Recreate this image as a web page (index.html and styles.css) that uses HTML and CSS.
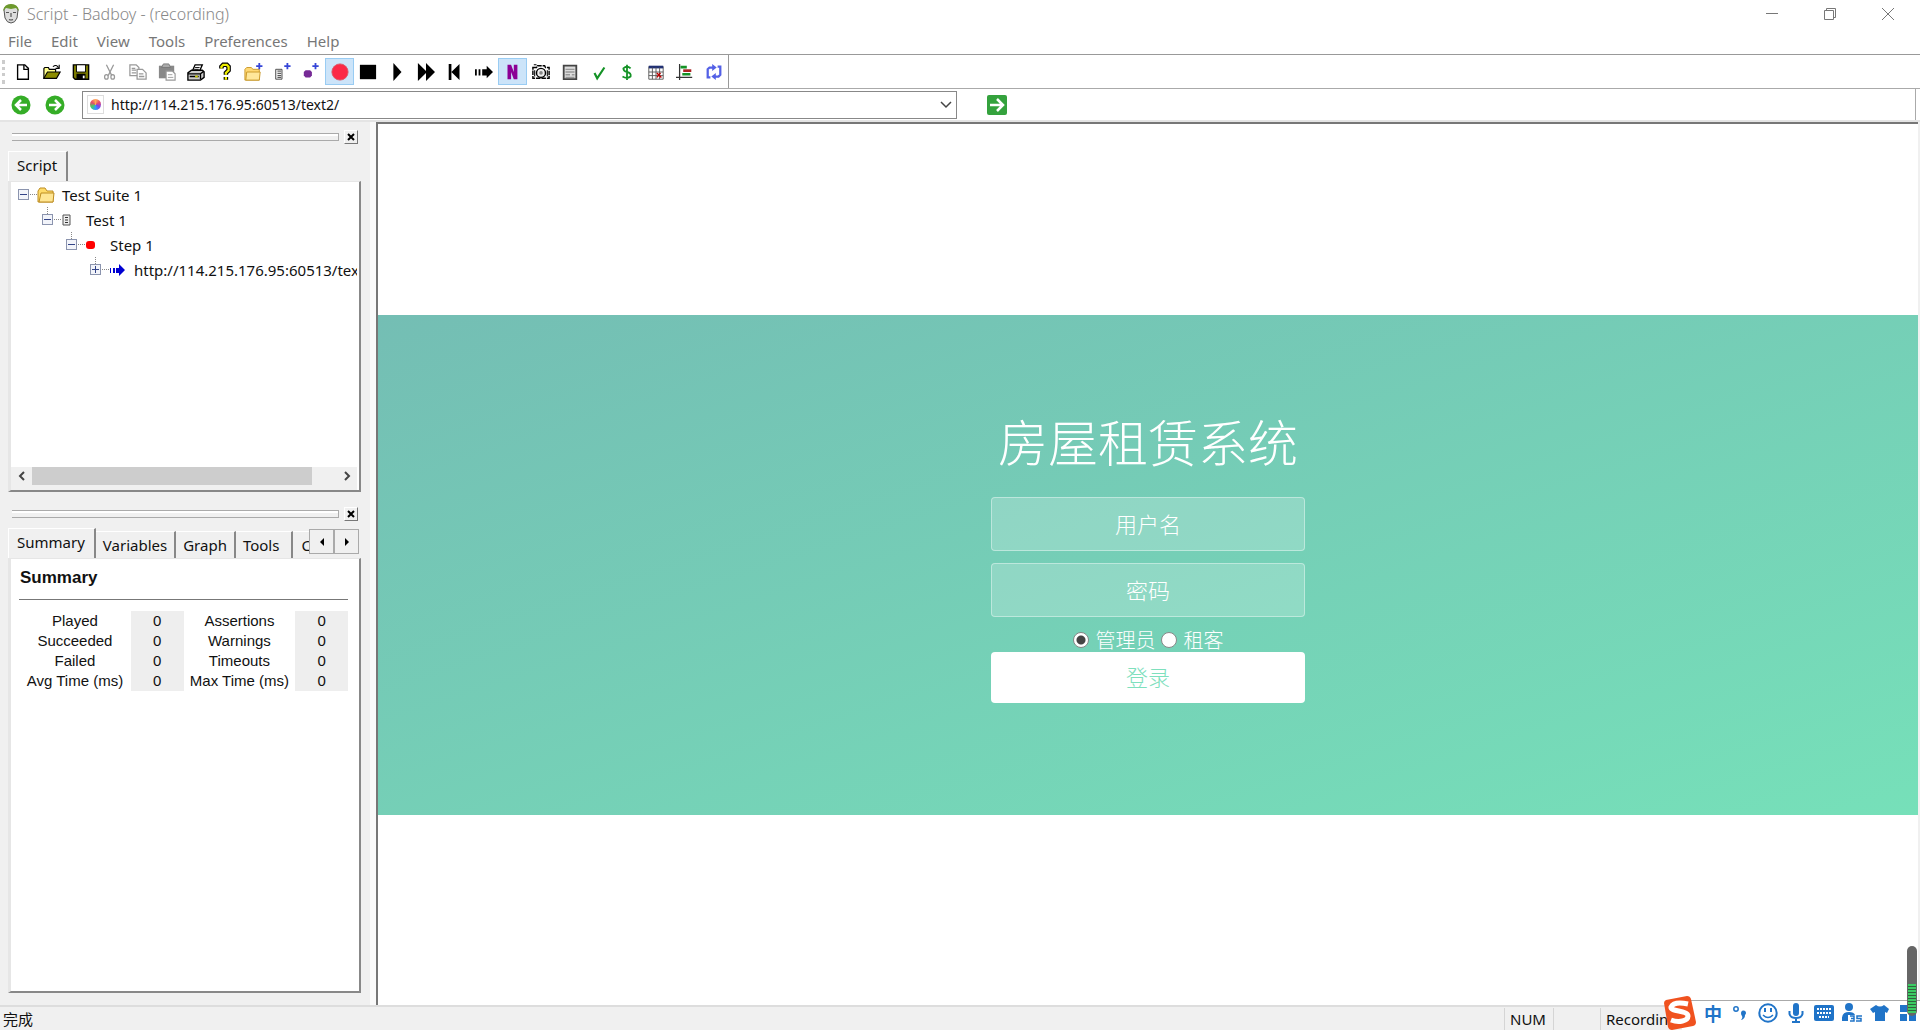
FILE: index.html
```html
<!DOCTYPE html>
<html lang="zh-CN">
<head>
<meta charset="utf-8">
<title>Script - Badboy - (recording)</title>
<link rel="stylesheet" href="styles.css">
</head>
<body>
<header class="titlebar">
  <svg class="app-icon" viewBox="0 0 18 20"><path d="M2 6Q3 1 9 1t7 5l-1 8q-2 5-6 5t-6-5z" fill="#ddd" stroke="#555"/><path d="M1 7Q2 0 9 0t8 7l-3-3-5 1-5-1z" fill="#6d9a2c"/><path d="M4 8.500h3M11 8.500h3M9 9v4M7 15.500q2 1 4 0" stroke="#555" stroke-width="1.200" fill="none"/></svg>
  <span class="title-text">Script - Badboy - (recording)</span>
  <div class="window-buttons">
    <button aria-label="Minimize"><svg viewBox="0 0 12 12"><path d="M0 5.500h12"/></svg></button>
    <button aria-label="Restore"><svg viewBox="0 0 12 12"><path d="M.5 2.500h9v9h-9zM2.500 2.500v-2h9v9h-2"/></svg></button>
    <button aria-label="Close"><svg viewBox="0 0 12 12"><path d="M0 0l12 12M12 0L0 12"/></svg></button>
  </div>
</header>
<nav class="menubar">
  <button>File</button><button>Edit</button><button>View</button><button>Tools</button><button>Preferences</button><button>Help</button>
</nav>
<div class="toolbar">
  <span class="grip"></span>
  <div class="tools">
    <button aria-label="New"><svg viewBox="0 0 20 20"><path d="M4 2h8l4 4v12H4z" fill="#fff" stroke="#000" stroke-width="1.500"/><path d="M11 2v5h5" fill="none" stroke="#000" stroke-width="1.500"/></svg></button>
    <button aria-label="Open"><svg viewBox="0 0 20 20"><path d="M1 17V6l1-1h4l1 2h7v3" fill="#ffff8c" stroke="#000" stroke-width="1.300"/><path d="M1 17l4-7h14l-4 7z" fill="#8b8b00" stroke="#000" stroke-width="1.300"/><path d="M11 4q4-3 6 1M18 2v4h-4" fill="none" stroke="#000" stroke-width="1.200"/></svg></button>
    <button aria-label="Save"><svg viewBox="0 0 20 20"><path d="M1.500 2h17v16h-15l-2-2z" fill="#7b7b00" stroke="#000" stroke-width="1.500"/><path d="M5 2h10v8H5z" fill="#fff" stroke="#000"/><path d="M5 12h10v6H5z"/><path d="M12 14h2v3h-2z" fill="#fff"/></svg></button>
    <button aria-label="Cut"><svg viewBox="0 0 20 20" fill="none" stroke="#999" stroke-width="1.400"><path d="M6 2l6 12M14 2L8 14"/><ellipse cx="6" cy="15.500" rx="2" ry="2.500"/><ellipse cx="13" cy="15.500" rx="2" ry="2.500"/></svg></button>
    <button aria-label="Copy"><svg viewBox="0 0 20 20" fill="#fff" stroke="#999" stroke-width="1.400"><path d="M1 2h7l3 3v9H1z"/><path d="M9 7h6l4 4v7H9z"/><path d="M3 6h4M3 8h5M3 11h5M11 12h5M11 15h6"/></svg></button>
    <button aria-label="Paste"><svg viewBox="0 0 20 20"><path d="M1 3h17v14H1z" fill="#888"/><path d="M6 1h6l2 4H4z" fill="#aaa" stroke="#777"/><path d="M9 9h7l3 3v7H9z" fill="#fff" stroke="#999" stroke-width="1.300"/><path d="M11 13h5M11 16h6" stroke="#999"/></svg></button>
    <button aria-label="Print"><svg viewBox="0 0 20 20"><path d="M6 9l3-7h8l-3 7" fill="#fff" stroke="#000" stroke-width="1.500"/><path d="M9 5h5M8 7h5" stroke="#000"/><path d="M1 11l4-3h12l2 2v6l-4 3H1z" fill="#ccc" stroke="#000" stroke-width="1.500"/><path d="M1 12h14v6M15 12l4-3M3 15h10" fill="none" stroke="#000" stroke-width="1.500"/><path d="M9 14h3v2H9z" fill="#cc0"/></svg></button>
    <button aria-label="Help"><svg viewBox="0 0 20 20" fill="none"><path d="M6 6V4l2-2h4l2 2v4l-3 3v2M11 15.500v3" stroke="#000" stroke-width="5"/><path d="M6 6V4l2-2h4l2 2v4l-3 3v2M11 15.500v3" stroke="#ee0" stroke-width="2.500"/></svg></button>
    <button aria-label="New suite"><svg viewBox="0 0 20 20"><path d="M1 19V7l2-2h5l2 2h7v12z" fill="#ffd873" stroke="#c79525"/><path d="M3 10h15l-1 9H2z" fill="#ffe79a" stroke="#c79525"/><path class="plus" d="M17 0v7M13.500 3.500h7"/></svg></button>
    <button aria-label="New test"><svg viewBox="0 0 20 20"><path d="M3 7h7v11H3z" fill="#eee" stroke="#444"/><path d="M5 9h4M5 11.500h4M5 14h4M5 16h4" stroke="#333"/><path class="plus" d="M16 0v7M12.500 3.500h7"/></svg></button>
    <button aria-label="New step"><svg viewBox="0 0 20 20"><path d="M4 8h5l2 2v4l-2 2H4l-2-2v-4z" fill="#762a96"/><path class="plus" d="M15 0v7M11.500 3.500h7"/></svg></button>
    <button class="on" aria-label="Record"><svg viewBox="0 0 20 20"><circle cx="10" cy="10" r="9" fill="#fc2947" stroke="#d95a66"/></svg></button>
    <button aria-label="Stop"><svg viewBox="0 0 20 20"><path d="M1 2h18v16H1z"/></svg></button>
    <button aria-label="Play"><svg viewBox="0 0 20 20"><path d="M6 0l9 10-9 10z"/></svg></button>
    <button aria-label="Play all"><svg viewBox="0 0 20 20"><path d="M1 0l9 9V0l10 10-10 10v-9l-9 9z"/></svg></button>
    <button aria-label="Rewind"><svg viewBox="0 0 20 20"><path d="M3 1h3v18H3zM15 1v18L6 10z"/></svg></button>
    <button aria-label="Next"><svg viewBox="0 0 20 20"><path d="M0 7h2v7H0zM4 7h2v7H4zM8 7h5V3l7 7-7 7v-3H8z"/></svg></button>
    <button class="on" aria-label="Navigation mode"><svg viewBox="0 0 20 20"><path d="M5 2h4l3 8V2h4v16h-4l-3-8v8H5z" fill="#8c0095"/></svg></button>
    <button aria-label="Screenshot"><svg viewBox="0 0 20 20"><path d="M1 5h4l1-2h8l1 2h4v12H1z" fill="#fff" stroke="#000" stroke-width="1.600" stroke-dasharray="5 1"/><circle cx="10" cy="11" r="5" fill="#eee" stroke="#000" stroke-width="1.600"/><circle cx="10" cy="11" r="2" fill="#888"/><path d="M3 8v7M17 8v7M2 2h3" stroke="#000" stroke-width="1.200"/></svg></button>
    <button aria-label="Form"><svg viewBox="0 0 20 20"><path d="M3 3h14v15H3z" fill="#ddd" stroke="#444" stroke-width="2"/><path d="M5 7h10M5 10h10M5 13h5M12 13h3M5 16h10" stroke="#999" stroke-width="1.500"/></svg></button>
    <button aria-label="Assertion"><svg viewBox="0 0 20 20"><path d="M5 11l3 6L16 5" fill="none" stroke="#149226" stroke-width="2.400"/></svg></button>
    <button aria-label="Variable"><svg viewBox="0 0 20 20"><path d="M14 6q-4-4-8 0 0 3 4 4 5 1 4 5-4 3-9 0M10 2v17" fill="none" stroke="#149226" stroke-width="2"/></svg></button>
    <button aria-label="Table"><svg viewBox="0 0 20 20"><path d="M2 4h16v14H2z" fill="#fff" stroke="#555"/><path d="M2 3h16v3H2z" fill="#213174"/><path d="M2 10h16M2 14h16M6 5v13M10 5v13M14 5v13" stroke="#555"/><path d="M11 11l5 5M15 11l-4 5" stroke="#b00" stroke-width="1.600"/></svg></button>
    <button aria-label="Chart"><svg viewBox="0 0 20 20"><path d="M4 1v18M0 16h18" stroke="#333" stroke-width="1.400"/><path d="M5 3h7v3H5zM7 11h9v3H7z" fill="#149226"/><path d="M8 7h9v3H8z" fill="#a22"/></svg></button>
    <button aria-label="Refresh"><svg viewBox="0 0 20 20"><path d="M6 16H3V7l2-2h4M14 4h3v9l-2 2h-4" fill="none" stroke="#5360e6" stroke-width="2.500"/><path d="M8 1l5 4-5 4zM12 11l-5 4 5 4z" fill="#5360e6"/></svg></button>
  </div>
</div>
<div class="addressbar">
  <button class="round" aria-label="Back"><svg viewBox="0 0 20 20"><circle cx="10" cy="10" r="9.500" fill="#35ad27"/><path d="M16 10H5M10 5l-5 5 5 5" fill="none" stroke="#fff" stroke-width="2.500"/></svg></button>
  <button class="round" aria-label="Forward"><svg viewBox="0 0 20 20"><circle cx="10" cy="10" r="9.500" fill="#35ad27"/><path d="M4 10h11M10 5l5 5-5 5" fill="none" stroke="#fff" stroke-width="2.500"/></svg></button>
  <div class="url-box">
    <span class="page-icon"><i></i></span>
    <input type="text" aria-label="Address" value="http://114.215.176.95:60513/text2/">
    <button aria-label="Show addresses"><svg viewBox="0 0 12 12"><path d="M1 3l5 5 5-5" fill="none" stroke="#444" stroke-width="1.500"/></svg></button>
  </div>
  <button class="go" aria-label="Go"><svg viewBox="0 0 20 20"><rect width="20" height="20" rx="2" fill="#34a23d"/><path d="M3 10h12M10 4l6 6-6 6" fill="none" stroke="#fff" stroke-width="2.500"/></svg></button>
</div>
<main class="workspace">
  <aside class="dock">
    <section class="pane">
      <div class="pane-grip"><i></i><button aria-label="Close script pane"><svg viewBox="0 0 8 8"><path d="M1 1l6 6M7 1L1 7" stroke="#000" stroke-width="2"/></svg></button></div>
      <div class="tabs"><button class="tab active">Script</button></div>
      <div class="pane-body tree-body">
        <ul class="tree">
          <li class="level-1"><i class="toggle"></i><svg viewBox="0 0 18 16"><path d="M1 15V4l2-3h5l2 3h6v11z" fill="#ffdb69" stroke="#bd8d23"/><path d="M4 6h13l-1 9H2z" fill="#ffe694" stroke="#bd8d23"/></svg><span>Test Suite 1</span></li>
          <li class="level-2"><i class="toggle"></i><svg viewBox="0 0 18 16"><path d="M2 3h7v10H2z" fill="#eee" stroke="#555"/><path d="M4 5.500h3M4 8h3M4 10.500h3" stroke="#333"/></svg><span>Test 1</span></li>
          <li class="level-3"><i class="toggle"></i><svg viewBox="0 0 18 16"><rect x="1" y="4" width="9" height="8" rx="3" fill="#f00"/></svg><span>Step 1</span></li>
          <li class="level-4"><i class="toggle closed"></i><svg viewBox="0 0 18 16"><path d="M1 6h1v5H1zM4 6h2v5H4zM7 6h3V2l6 6-6 6v-3H7z" fill="#0000d2"/></svg><span>http://114.215.176.95:60513/text2/</span></li>
        </ul>
        <div class="scrollbar">
          <button aria-label="Scroll left"><svg viewBox="0 0 12 12"><path d="M8 2L4 6l4 4"/></svg></button>
          <span class="track"><i></i></span>
          <button aria-label="Scroll right"><svg viewBox="0 0 12 12"><path d="M4 2l4 4-4 4"/></svg></button>
        </div>
      </div>
    </section>
    <section class="pane grow">
      <div class="pane-grip"><i></i><button aria-label="Close summary pane"><svg viewBox="0 0 8 8"><path d="M1 1l6 6M7 1L1 7" stroke="#000" stroke-width="2"/></svg></button></div>
      <div class="tabs"><button class="tab active">Summary</button><button class="tab">Variables</button><button class="tab">Graph</button><button class="tab wide">Tools</button><button class="tab cut">Checks</button><span class="spin"><button aria-label="Previous tabs"><svg viewBox="0 0 8 8"><path d="M6 0v8L2 4z"/></svg></button><button aria-label="Next tabs"><svg viewBox="0 0 8 8"><path d="M2 0v8l4-4z"/></svg></button></span></div>
      <div class="pane-body summary">
        <h2>Summary</h2>
        <table>
          <tr><th>Played</th><td>0</td><th>Assertions</th><td>0</td></tr>
          <tr><th>Succeeded</th><td>0</td><th>Warnings</th><td>0</td></tr>
          <tr><th>Failed</th><td>0</td><th>Timeouts</th><td>0</td></tr>
          <tr><th>Avg Time (ms)</th><td>0</td><th>Max Time (ms)</th><td>0</td></tr>
        </table>
      </div>
    </section>
  </aside>
  <div class="browser">
    <div class="login">
      <h1>房屋租赁系统</h1>
      <form>
        <input type="text" placeholder="用户名" aria-label="用户名">
        <input type="password" placeholder="密码" aria-label="密码">
        <div class="roles">
          <label><input type="radio" name="role" checked> 管理员</label>
          <label><input type="radio" name="role"> 租客</label>
        </div>
        <button type="button">登录</button>
      </form>
    </div>
  </div>
</main>
<footer class="statusbar">
  <span class="state">完成</span><span class="cell num">NUM</span><span class="cell blank"></span><span class="cell rec">Recording</span>
</footer>
<div class="ime">
  <svg class="ime-logo" viewBox="0 0 34 34"><path d="M2 7Q2 5 4 4L25 0q3 0 4 3l5 23q0 3-3 4L10 34q-3 0-4-3z" fill="#f0521f"/><path d="M26 8Q12 5 9 11c-1 5 17 3 17 9 0 5-9 7-17 4" fill="none" stroke="#fff" stroke-width="5"/></svg>
  <span class="ime-mode">中</span>
  <svg viewBox="0 0 20 20"><circle cx="6" cy="6" r="2.200" fill="none" stroke="#2074c8" stroke-width="1.500"/><path d="M11 10a2.500 2.500 0 1 1 4 2q0 4-4 5 2-2 1-4-1-1-1-3z"/></svg>
  <svg viewBox="0 0 20 20"><circle cx="10" cy="10" r="8.700" fill="none" stroke="#2074c8" stroke-width="2"/><path d="M6 5h2v4H6zM12 5h2v4h-2z"/><path d="M5 12q5 5 10 0" fill="none" stroke="#2074c8" stroke-width="1.500"/></svg>
  <svg viewBox="0 0 20 20"><rect x="7" y="0" width="6" height="13" rx="3"/><path d="M3.500 8v3q1 4 6.500 4t6.500-4V8M10 15v4M6 19h8" fill="none" stroke="#2074c8" stroke-width="2"/></svg>
  <svg viewBox="0 0 20 20"><rect x="0" y="2" width="20" height="16" rx="2"/><path d="M3 6h14M3 10h14M5 14h10" stroke="#fff" stroke-width="2" stroke-dasharray="2 1"/></svg>
  <svg viewBox="0 0 20 20"><circle cx="7" cy="4" r="4"/><path d="M0 18q-1-9 7-9 5 0 6 3H6v6z"/><path d="M8 13h4v5H8M9 15.500h3M20 13h-5v2.500h4V18h-5" fill="none" stroke="#2074c8" stroke-width="1.500"/></svg>
  <svg viewBox="0 0 20 20"><path d="M6 2q4 3 8 0l5 4-2 4-2-1v9H5V9l-2 1-3-4z"/></svg>
  <svg viewBox="0 0 20 20"><path d="M2 2h7v7H2zM11 2h7v7h-7zM2 11h7v7H2zM11 11h7v7h-7z"/></svg>
</div>
<div class="meter"><i></i></div>
</body>
</html>
```

FILE: styles.css
```css
* { box-sizing: border-box; }
body {
  margin: 0;
  min-height: 100vh;
  display: flex;
  flex-direction: column;
  background: #fff;
  color: #111;
  font: 15px/20px "Noto Sans", "Noto Sans CJK SC", sans-serif;
  position: relative;
}
button, input { font: inherit; color: inherit; }
button { border: 0; padding: 0; background: none; display: flex; align-items: center; justify-content: center; }
svg { display: block; flex: none; }

.titlebar { height: 28px; display: flex; align-items: center; padding-left: 2px; gap: 7px; color: #888; }
.app-icon { width: 18px; height: 20px; }
.title-text { font-weight: 300; font-size: 16px; }
.window-buttons { margin-left: auto; display: flex; padding-right: 3px; }
.window-buttons button { width: 58px; height: 28px; }
.window-buttons svg { width: 12px; height: 12px; fill: none; stroke: #777; }
.menubar { height: 26px; display: flex; padding-left: 8px; gap: 19px; color: #777; }

.toolbar { height: 35px; border-top: 1px solid #999; border-bottom: 1px solid #aaa; display: flex; align-items: center; gap: 3px; padding-left: 2px; }
.grip { width: 4px; height: 24px; border-left: 3px dotted #ccc; }
.tools { width: 720px; height: 33px; display: grid; grid-template-columns: repeat(25, 1fr); align-items: center; border-right: 1px solid #999; }
.tools button { height: 27px; }
.tools svg { width: 20px; height: 18px; overflow: visible; }
.tools .on { background: #cce4f9; border: 1px solid #99ccf3; }
.plus { stroke: #3545d8; stroke-width: 2; }

.addressbar { height: 31px; margin-right: 4px; border-right: 1px solid #aaa; display: flex; align-items: center; padding-left: 11px; }
.round { margin-right: 14px; }
.addressbar > button svg { width: 20px; height: 20px; }
.url-box { width: 875px; height: 28px; border: 1px solid #888; display: flex; align-items: center; margin: 0 30px 0 3px; padding: 0 4px; }
.page-icon { width: 17px; height: 19px; border: 1px solid #ddd; padding: 3px 2px; }
.page-icon i { display: block; width: 11px; height: 11px; border-radius: 50%; background: conic-gradient(#fa5, #e64a6c, #74e, #39f, #4c6, #e64a6c, #fa5); }
.url-box input { flex: 1; border: 0; padding: 0 0 0 7px; outline: 0; font-size: 14px; background: none; }
.url-box button svg { width: 12px; height: 12px; }

.workspace { flex: 1; display: flex; border-top: 2px solid #e4e4e4; background: #f0f0f0; }
.dock { width: 376px; padding: 7px 9px 12px 8px; border-right: 6px solid #fafafa; display: flex; flex-direction: column; gap: 14px; flex: none; }
.pane { display: flex; flex-direction: column; }
.grow { flex: 1; }
.pane-grip { height: 15px; display: flex; align-items: center; gap: 5px; padding: 0 3px 0 4px; }
.pane-grip i { flex: 1; height: 8px; border: solid #aaa; border-width: 1px 1px 1px 0; background: linear-gradient(#fff 2px, #f0f0f0 2px); }
.pane-grip button { width: 14px; height: 14px; border: 1px solid #fff; border-right-color: #777; border-bottom-color: #777; }
.pane-grip svg { width: 8px; height: 8px; }
.tabs { height: 37px; padding-top: 7px; display: flex; align-items: flex-end; position: relative; overflow: hidden; }
.tab { height: 27px; padding: 0 7px; border-right: 2px solid #888; border-top: 1px solid #fff; flex: none; }
.tab.active { height: 30px; padding: 0 9px 4px 8px; border-left: 1px solid #fff; }
.tab.wide { padding-right: 12px; }
.tab.cut { border-right: 0; padding-left: 8px; }
.spin { position: absolute; right: 2px; top: 8px; display: flex; background: #f0f0f0; }
.spin button { width: 25px; height: 25px; border: 1px solid #aaa; }
.spin svg { width: 8px; height: 8px; }
.pane-body { background: #fff; border: 2px solid #888; border-left: 3px solid #e6e6e6; border-top: 1px solid #e6e6e6; }
.grow .pane-body { flex: 1; }
.tree-body { height: 311px; display: flex; flex-direction: column; padding-right: 2px; }
.tree { list-style: none; margin: 0; padding: 0; flex: 1; overflow: hidden; }
.tree li { height: 25px; display: flex; align-items: center; white-space: nowrap; }
.tree li svg { width: 18px; height: 16px; margin: 0 7px 0 8px; }
.level-1 { padding-left: 7px; }
.level-2 { padding-left: 31px; }
.level-3 { padding-left: 55px; }
.level-4 { padding-left: 79px; }
.toggle { width: 11px; height: 11px; flex: none; border: 1px solid #8b94ae; background: linear-gradient(#348, #348) center / 7px 1px no-repeat #f2f4fa; position: relative; }
.toggle::after { content: ""; position: absolute; left: 11px; top: 4px; width: 7px; border-top: 1px dotted #888; }
.toggle.closed { background: linear-gradient(#348, #348) center / 7px 1px no-repeat, linear-gradient(#348, #348) center / 1px 7px no-repeat #f2f4fa; }
li + li .toggle::before { content: ""; position: absolute; left: 4px; top: -8px; height: 7px; border-left: 1px dotted #888; }
.scrollbar { height: 23px; padding-bottom: 5px; background: #f0f0f0; display: flex; }
.scrollbar button { width: 21px; }
.scrollbar svg { width: 12px; height: 12px; fill: none; stroke: #444; stroke-width: 2; }
.track { flex: 1; display: flex; }
.track i { width: 92%; background: #cdcdcd; }

.summary { padding: 9px 11px 0 8px; font-family: "Liberation Sans", sans-serif; }
.summary h2 { margin: 0 0 11px; padding: 0 1px 11px; font-size: 17px; line-height: 20px; border-bottom: 1px solid #777; }
.summary table { width: 100%; border-spacing: 0; table-layout: fixed; }
.summary th, .summary td { padding: 0; height: 20px; line-height: 20px; font-weight: 400; text-align: center; white-space: nowrap; }
.summary th { width: 34%; }
.summary td { background: #eee; }

.browser { flex: 1; min-width: 0; border-left: 2px solid #777; border-top: 2px solid #777; margin-right: 2px; background: #fff; display: flex; align-items: center; }
.login { width: 100%; height: 500px; padding-top: 90px; text-align: center; color: #fff; font-family: "Noto Sans CJK SC", sans-serif; font-weight: 300; background: linear-gradient(to bottom right, #74beb4, #76e0b9); }
.login h1 { margin: 0 0 22px; font-size: 50px; line-height: 70px; font-weight: 300; }
.login form { width: 314px; margin: 0 auto; }
.login form > input { display: block; width: 100%; height: 54px; margin-bottom: 12px; border: 1px solid rgba(255,255,255,.4); border-radius: 4px; background: rgba(255,255,255,.2); text-align: center; font-size: 22px; padding: 0 0 2px; }
.login form > input::placeholder { color: #fff; opacity: 1; }
.roles { height: 24px; margin-top: -1px; display: flex; justify-content: center; gap: 5px; font-size: 20px; line-height: 24px; }
.roles label { display: flex; align-items: center; gap: 7px; }
.roles input { appearance: none; margin: 0; width: 16px; height: 16px; border: 1px solid #888; border-radius: 50%; background: #fff; }
.roles input:checked { background: radial-gradient(#444 4px, #fff 5px); }
.login form > button { width: 100%; height: 51px; padding-bottom: 2px; border-radius: 4px; background: #fff; color: #7ee0bd; font-size: 22px; }

.statusbar { height: 25px; border-top: 2px solid #ddd; background: #f0f0f0; display: flex; align-items: center; line-height: 22px; }
.state { flex: 1; padding-left: 3px; }
.cell { height: 22px; border-left: 1px solid #d5d5d5; padding-left: 5px; }
.num { width: 49px; }
.blank { width: 47px; }
.rec { width: 320px; }
.ime { position: absolute; right: 0; bottom: 0; width: 258px; height: 34px; display: flex; align-items: center; gap: 8px; background: linear-gradient(#aaa, #aaa) 20px 4px / 100% 1px no-repeat, linear-gradient(#fff, #fff) 20px 5px / 100% 100% no-repeat; overflow: hidden; color: #2074c8; }
.ime svg { width: 20px; height: 20px; fill: #2074c8; }
.ime .ime-logo { width: 34px; height: 34px; }
.ime-mode { font: 700 18px/20px "Noto Sans CJK SC", sans-serif; }
.meter { position: absolute; right: 3px; bottom: 14px; width: 10px; height: 70px; border-radius: 5px; background: #666; padding: 38px 1px 3px; }
.meter i { display: block; height: 29px; background: repeating-linear-gradient(#3ccb63 0 2px, #30633d 2px 3px); }
```
